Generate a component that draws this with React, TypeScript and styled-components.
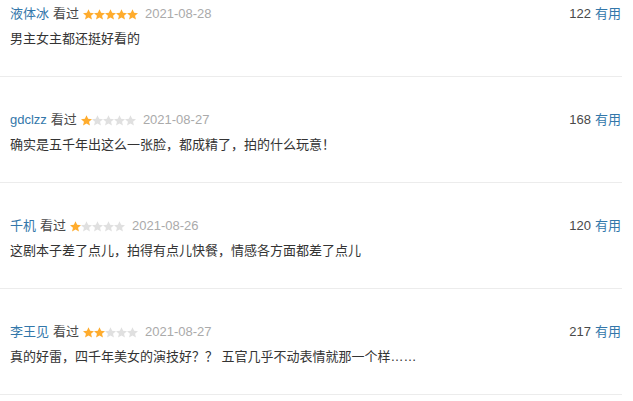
import React from "react";
import styled, { createGlobalStyle } from "styled-components";

const Global = createGlobalStyle`
  html, body { margin: 0; padding: 0; background: #fff; }
  body { font-family: "Liberation Sans", Arial, "Noto Sans CJK SC", sans-serif; }
`;

const List = styled.div`
  width: 622px;
`;

const Item = styled.div`
  padding: 33px 1px 27px 10px;
  border-bottom: 1px solid #ececec;
  &:first-child { padding-top: 4px; }
`;

const Head = styled.div`
  display: flex;
  align-items: center;
  height: 20px;
  font-size: 13px;
  line-height: 20px;
`;

const Name = styled.span`
  color: #3377aa;
`;

const Watched = styled.span`
  color: #494949;
  margin-left: 4px;
`;

const Stars = styled.span`
  display: inline-flex;
  margin-left: 4px;
`;

const DateText = styled.span`
  color: #aaaaaa;
  margin-left: 7px;
`;

const Votes = styled.span`
  margin-left: auto;
  color: #494949;
`;

const Useful = styled.span`
  color: #3377aa;
  margin-left: 4px;
`;

const Content = styled.p`
  margin: 5px 0 0;
  font-size: 13px;
  line-height: 20px;
  color: #333;
`;

const Star = ({ on }: { on: boolean }) => (
  <svg width="11" height="11" viewBox="1.2 1.5 21.6 21">
    <path
      d="M12 1.5l3.2 7.1 7.6.7-5.8 5.1 1.8 7.6L12 18l-6.8 4 1.8-7.6L1.2 9.3l7.6-.7z"
      fill={on ? "#ffac2d" : "#e0e0e0"}
    />
  </svg>
);

const data = [
  { name: "液体冰", stars: 5, date: "2021-08-28", votes: 122, text: "男主女主都还挺好看的" },
  { name: "gdclzz", stars: 1, date: "2021-08-27", votes: 168, text: "确实是五千年出这么一张脸，都成精了，拍的什么玩意！" },
  { name: "千机", stars: 1, date: "2021-08-26", votes: 120, text: "这剧本子差了点儿，拍得有点儿快餐，情感各方面都差了点儿" },
  { name: "李王见", stars: 2, date: "2021-08-27", votes: 217, text: "真的好雷，四千年美女的演技好？？ 五官几乎不动表情就那一个样……" },
];

export default function App() {
  return (
    <>
      <Global />
      <List>
        {data.map((d, i) => (
          <Item key={i}>
            <Head>
              <Name>{d.name}</Name>
              <Watched>看过</Watched>
              <Stars>
                {[0, 1, 2, 3, 4].map((k) => (
                  <Star key={k} on={k < d.stars} />
                ))}
              </Stars>
              <DateText>{d.date}</DateText>
              <Votes>{d.votes}</Votes>
              <Useful>有用</Useful>
            </Head>
            <Content>{d.text}</Content>
          </Item>
        ))}
      </List>
    </>
  );
}
